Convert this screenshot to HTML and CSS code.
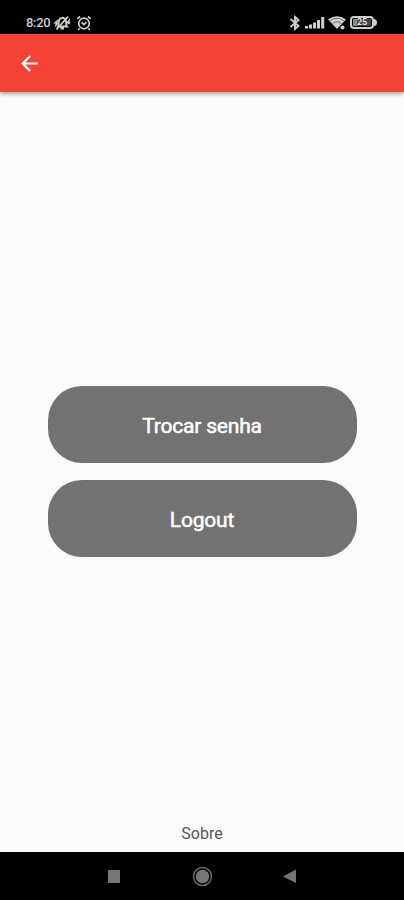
FILE: index.html
```html
<!DOCTYPE html>
<html lang="pt-BR">
<head>
<meta charset="utf-8">
<meta name="viewport" content="width=device-width, initial-scale=1">
<title>Conta</title>
<link rel="stylesheet" href="styles.css">
</head>
<body>
<div class="screen">
  <div class="status">
    <span class="time">8:20</span>
    <svg class="mute" width="18" height="16" viewBox="0 0 18 16" fill="none" stroke="currentColor">
      <path d="M5 11.500C6.500 9.500 4.500 6 7 3.800C9 2 12.500 3 13 5.500C13.300 8 12.700 10 14 11.500ZM7.500 13.500H11" stroke-width="1.900"/>
      <path d="M3.500 14.500L15 1.500" stroke-width="1.800"/>
      <path d="M1 8.500L4 6L3 10L5 8M14 8L16 5.500L15.500 9L17 7" stroke-width="1.500"/>
    </svg>
    <svg class="alarm" width="16" height="16" viewBox="0 0 16 16" fill="none" stroke="currentColor" stroke-width="1.700">
      <circle cx="8" cy="8.500" r="5.300"/>
      <path d="M1.300 3.800L4 1.500M14.700 3.800L12 1.500M3.500 13.500L2.300 15M12.500 13.500L13.700 15M5.500 7.500L8 9.500L10.500 7"/>
    </svg>
    <span class="spacer"></span>
    <svg class="bluetooth" width="12" height="16" viewBox="0 0 12 16" fill="none" stroke="currentColor" stroke-width="1.900">
      <path d="M1.500 4L9.500 11L6 14V2L9.500 5L1.500 12"/>
    </svg>
    <svg class="signal" width="20" height="13" viewBox="0 0 20 13" fill="currentColor">
      <path d="M0 10H3V12.500H0ZM4 8.500H7V12.500H4ZM8 6.500H11V12.500H8ZM12 4H15V12.500H12ZM16.200 1H19.200V12.500H16.200Z"/>
    </svg>
    <svg class="wifi" width="18" height="16" viewBox="0 0 18 16">
      <path d="M0 4.500Q9-2 18 4.500L9 14Z" fill="currentColor"/>
      <path d="M2 5.800Q9 .8 16 5.800M4.500 8.500Q9 5 13.500 8.500" fill="none" stroke="#444" stroke-width=".7"/>
      <circle cx="14.500" cy="12.500" r="2.800" fill="#000"/>
      <circle cx="14.500" cy="12.500" r="2" fill="currentColor"/>
    </svg>
    <span class="battery"><span class="level">25</span></span>
  </div>
  <header class="appbar">
    <svg width="25" height="25" viewBox="0 0 24 24" fill="currentColor">
      <path d="M20 11H7.830l5.590-5.590L12 4l-8 8 8 8 1.410-1.410L7.830 13H20v-2z"/>
    </svg>
  </header>
  <main class="content">
    <button class="action">Trocar senha</button>
    <button class="action">Logout</button>
    <a class="about">Sobre</a>
  </main>
  <nav class="navbar">
    <svg width="200" height="24" viewBox="0 0 200 24" fill="#767676">
      <path d="M8 6H20V19H8Z"/>
      <circle cx="102.500" cy="12.500" r="9" fill="none" stroke="#686868" stroke-width="1.500"/>
      <circle cx="102.500" cy="12.500" r="6.800"/>
      <path d="M196 5.500V19L183 12.500Z"/>
    </svg>
  </nav>
</div>
</body>
</html>
```
FILE: styles.css
```css
* { box-sizing: border-box; }

body {
  margin: 0;
  font-family: Roboto, "Liberation Sans", sans-serif;
  background: #fafafa;
}

.screen {
  display: flex;
  flex-direction: column;
  height: 900px;
  overflow: hidden;
}

.status {
  display: flex;
  flex: none;
  align-items: center;
  height: 34px;
  padding: 11px 27px 0 26px;
  background: #000;
  color: #cfcfcf;
}

.status svg { flex: none; }

.time {
  width: 27px;
  padding-top: 1px;
  font-size: 13px;
  font-weight: 500;
  line-height: 16px;
  letter-spacing: -0.3px;
  white-space: nowrap;
}

.alarm { margin-left: 5px; }
.spacer { flex: 1; }
.signal { margin-left: 4px; }
.wifi { margin-left: 3px; }

.battery {
  position: relative;
  width: 24px;
  height: 13px;
  margin: 0 3px 0 4px;
  padding: 1px;
  border: 2px solid currentColor;
  border-radius: 4px;
}

.battery::after {
  content: "";
  position: absolute;
  top: 1px;
  right: -5px;
  width: 4px;
  height: 7px;
  border-radius: 0 4px 4px 0;
  background: currentColor;
}

.level {
  display: block;
  height: 7px;
  background: linear-gradient(90deg, #888 25%, #444 25%);
  color: #eee;
  font-size: 9px;
  font-weight: 500;
  line-height: 7px;
  text-align: center;
}

.appbar {
  z-index: 1;
  display: flex;
  flex: none;
  align-items: center;
  height: 58px;
  padding-left: 17px;
  background: #f44336;
  color: #fff;
  box-shadow: 0 2px 4px rgba(0, 0, 0, 0.35);
}

.content {
  display: flex;
  flex: 1;
  flex-direction: column;
  align-items: center;
  gap: 17px;
  padding-top: 294px;
}

.action {
  width: 309px;
  height: 77px;
  margin-left: 1px;
  padding: 3px 1px 0 0;
  border: 0;
  border-radius: 34px;
  background: #727272;
  color: #fff;
  font: 400 21px/28px Roboto, sans-serif;
  letter-spacing: -0.2px;
  -webkit-text-stroke: 0.5px #fff;
}

.about {
  margin: auto 0 8px;
  color: #555;
  font-size: 16px;
  line-height: 20px;
}

.navbar {
  display: flex;
  flex: none;
  align-items: center;
  height: 48px;
  padding-left: 100px;
  background: #000;
}
```
